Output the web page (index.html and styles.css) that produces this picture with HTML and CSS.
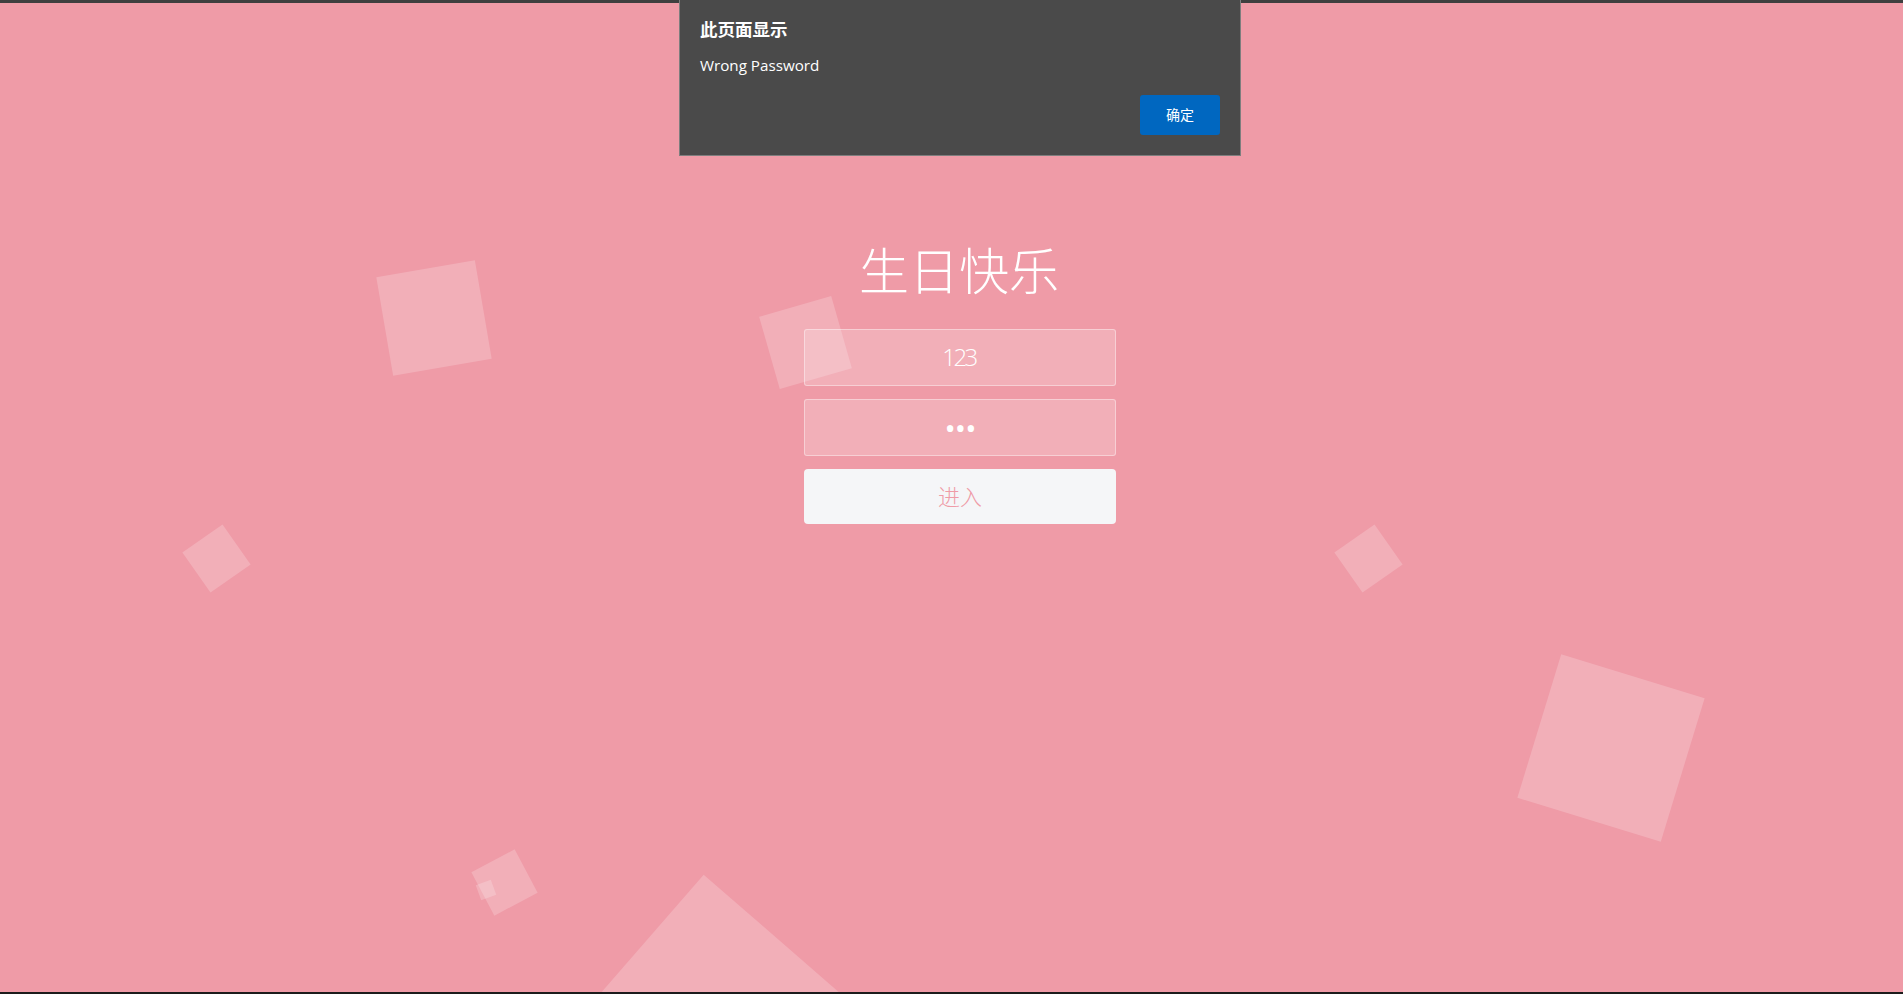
FILE: index.html
```html
<!DOCTYPE html>
<html lang="zh-CN">
<head>
<meta charset="utf-8">
<title>生日快乐</title>
<link rel="stylesheet" href="styles.css">
</head>
<body>
<div class="topline"></div>
<div class="stage">
  <ul class="bg-squares">
    <li class="sq sq1"></li>
    <li class="sq sq2"></li>
    <li class="sq sq3"></li>
    <li class="sq sq4"></li>
    <li class="sq sq5"></li>
    <li class="sq sq6"></li>
    <li class="sq sq7"></li>
    <li class="sq sq8"></li>
  </ul>
  <div class="wrapper">
    <h1 class="title">生日快乐</h1>
    <form class="form">
      <input class="field" type="text" value="123">
      <input class="field field-pass" type="password" value="123">
      <button class="enter" type="button">进入</button>
    </form>
  </div>
</div>
<div class="bottomline"></div>

<div class="dialog">
  <div class="dlg-title">此页面显示</div>
  <div class="dlg-msg">Wrong Password</div>
  <div class="dlg-actions">
    <button class="dlg-ok" type="button">确定</button>
  </div>
</div>
</body>
</html>
```

FILE: styles.css
```css
html, body {
  margin: 0;
  padding: 0;
  height: 100%;
  overflow: hidden;
}
body {
  display: flex;
  flex-direction: column;
  background: #ef9ba7;
  font-family: "Open Sans", "Noto Sans CJK SC", sans-serif;
}
.topline {
  height: 3px;
  background: #3f3f3f;
  flex: none;
}
.bottomline {
  height: 2px;
  background: #1c1c1c;
  flex: none;
}
.stage {
  flex: 1;
  position: relative;
  overflow: hidden;
  background: #ef9ba7;
}
.bg-squares {
  list-style: none;
  margin: 0;
  padding: 0;
}
.sq {
  position: absolute;
  background: rgba(255, 255, 255, 0.2);
}
.sq1 { left: 384px; top: 265px; width: 100px; height: 100px; transform: rotate(-9.7deg); }
.sq2 { left: 768px; top: 302px; width: 75px; height: 75px; transform: rotate(-16deg); }
.sq3 { left: 192px; top: 531px; width: 49px; height: 49px; transform: rotate(-35deg); }
.sq4 { left: 1344px; top: 531px; width: 49px; height: 49px; transform: rotate(-35deg); }
.sq5 { left: 1536px; top: 670px; width: 150px; height: 150px; transform: rotate(17deg); }
.sq6 { left: 480px; top: 855px; width: 49px; height: 49px; transform: rotate(-28deg); }
.sq7 { left: 478px; top: 879px; width: 16px; height: 16px; transform: rotate(-20deg); }
.sq8 { left: 591px; top: 923px; width: 250px; height: 250px; transform: rotate(41deg); }

.wrapper {
  position: relative;
  z-index: 1;
  display: flex;
  flex-direction: column;
  align-items: center;
  padding-top: 235px;
  padding-left: 15px;
}
.title {
  margin: 0 0 31px;
  height: 60px;
  line-height: 60px;
  font-family: "Noto Sans CJK SC", sans-serif;
  font-size: 50px;
  font-weight: 300;
  color: #ffffff;
  letter-spacing: 0;
}
.form {
  width: 312px;
  display: flex;
  flex-direction: column;
  margin: 0 0 0 2px;
}
.field {
  box-sizing: border-box;
  width: 312px;
  height: 57px;
  margin: 0 0 13px;
  padding: 0 15px 2px 15px;
  border: 1px solid rgba(255, 255, 255, 0.4);
  border-radius: 3px;
  background: rgba(255, 255, 255, 0.2);
  color: #ffffff;
  text-align: center;
  text-indent: -2px;
  font-family: "Open Sans", sans-serif;
  font-size: 24px;
  font-weight: 300;
  letter-spacing: -2.5px;
  outline: none;
}
.field-pass {
  padding-bottom: 0;
  text-indent: 0;
  font-size: 30px;
  font-weight: 400;
  letter-spacing: -1px;
}
.enter {
  box-sizing: border-box;
  width: 312px;
  height: 55px;
  border: 0;
  border-radius: 4px;
  background: #f5f6f8;
  color: #ef9ba7;
  font-family: "Noto Sans CJK SC", sans-serif;
  font-size: 22px;
  font-weight: 300;
  padding: 0 0 4px;
}

.dialog {
  position: absolute;
  z-index: 5;
  left: 679px;
  top: 0;
  width: 562px;
  height: 156px;
  box-sizing: border-box;
  background: #4a4a4a;
  border: 1px solid #7e7e7e;
  border-top: 0;
  padding: 17px 20px 0 20px;
  color: #ffffff;
  display: flex;
  flex-direction: column;
}
.dlg-title {
  font-family: "Noto Sans CJK SC", sans-serif;
  font-weight: 700;
  font-size: 17.5px;
  line-height: 24px;
  height: 24px;
}
.dlg-msg {
  margin-top: 14px;
  font-family: "Open Sans", sans-serif;
  font-size: 15.2px;
  line-height: 20px;
  height: 20px;
}
.dlg-actions {
  margin-top: 20px;
  display: flex;
  justify-content: flex-end;
}
.dlg-ok {
  width: 80px;
  height: 40px;
  border: 0;
  border-radius: 3px;
  background: #0067c0;
  color: #ffffff;
  font-family: "Noto Sans CJK SC", sans-serif;
  font-size: 14px;
  padding: 0 0 2px;
}
```
